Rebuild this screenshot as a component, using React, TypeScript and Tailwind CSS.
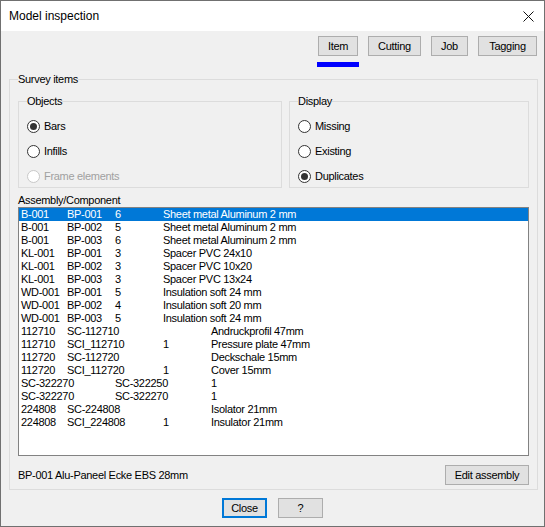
import React from 'react';

type Cell = { text: string; col: number };
type Row = Cell[];

const COLS = ['col-start-1', 'col-start-2', 'col-start-3', 'col-start-4', 'col-start-5'];

const simple = (a: string, b: string, q: string, d: string): Row => [
  { text: a, col: 0 },
  { text: b, col: 1 },
  { text: q, col: 2 },
  { text: d, col: 3 },
];

const rows: Row[] = [
  simple('B-001', 'BP-001', '6', 'Sheet metal Aluminum 2 mm'),
  simple('B-001', 'BP-002', '5', 'Sheet metal Aluminum 2 mm'),
  simple('B-001', 'BP-003', '6', 'Sheet metal Aluminum 2 mm'),
  simple('KL-001', 'BP-001', '3', 'Spacer PVC 24x10'),
  simple('KL-001', 'BP-002', '3', 'Spacer PVC 10x20'),
  simple('KL-001', 'BP-003', '3', 'Spacer PVC 13x24'),
  simple('WD-001', 'BP-001', '5', 'Insulation soft 24 mm'),
  simple('WD-001', 'BP-002', '4', 'Insulation soft 20 mm'),
  simple('WD-001', 'BP-003', '5', 'Insulation soft 24 mm'),
  [
    { text: '112710', col: 0 },
    { text: 'SC-112710', col: 1 },
    { text: 'Andruckprofil 47mm', col: 4 },
  ],
  [
    { text: '112710', col: 0 },
    { text: 'SCI_112710', col: 1 },
    { text: '1', col: 3 },
    { text: 'Pressure plate 47mm', col: 4 },
  ],
  [
    { text: '112720', col: 0 },
    { text: 'SC-112720', col: 1 },
    { text: 'Deckschale 15mm', col: 4 },
  ],
  [
    { text: '112720', col: 0 },
    { text: 'SCI_112720', col: 1 },
    { text: '1', col: 3 },
    { text: 'Cover 15mm', col: 4 },
  ],
  [
    { text: 'SC-322270', col: 0 },
    { text: 'SC-322250', col: 2 },
    { text: '1', col: 4 },
  ],
  [
    { text: 'SC-322270', col: 0 },
    { text: 'SC-322270', col: 2 },
    { text: '1', col: 4 },
  ],
  [
    { text: '224808', col: 0 },
    { text: 'SC-224808', col: 1 },
    { text: 'Isolator 21mm', col: 4 },
  ],
  [
    { text: '224808', col: 0 },
    { text: 'SCI_224808', col: 1 },
    { text: '1', col: 3 },
    { text: 'Insulator 21mm', col: 4 },
  ],
];

const Btn: React.FC<{ label: string; w: string; focused?: boolean }> = ({ label, w, focused }) => (
  <button
    className={
      'h-[20px] bg-[#e1e1e1] text-black leading-none flex items-center justify-center ' +
      w +
      (focused ? ' border-2 border-[#0078d7]' : ' border border-[#adadad]')
    }
  >
    {label}
  </button>
);

const Radio: React.FC<{ label: string; checked?: boolean; disabled?: boolean }> = ({
  label,
  checked,
  disabled,
}) => (
  <div className="h-[20px] flex items-center">
    <span
      className={
        'w-[13px] h-[13px] rounded-full border bg-white flex items-center justify-center ' +
        (disabled ? 'border-[#c8c8c8]' : 'border-[#333333]')
      }
    >
      {checked && <span className="w-[7px] h-[7px] rounded-full bg-[#333333]" />}
    </span>
    <span className={'ml-[4px] ' + (disabled ? 'text-[#a0a0a0]' : 'text-black')}>{label}</span>
  </div>
);

export default function App() {
  return (
    <div className="w-[545px] h-[527px] border border-[#707070] bg-[#f0f0f0] flex flex-col font-['Liberation_Sans',Arial,sans-serif] text-[11px] tracking-[-0.3px] text-black select-none">
      {/* Title bar */}
      <div className="h-[30px] bg-white flex items-center justify-between pl-[8px] pr-[10px] shrink-0">
        <span className="text-[12px] tracking-normal">Model inspection</span>
        <svg width="11" height="11" viewBox="0 0 11 11" className="mt-px">
          <path d="M0.5 0.5 L10.5 10.5 M10.5 0.5 L0.5 10.5" stroke="#111" strokeWidth="1" />
        </svg>
      </div>

      {/* Tabs */}
      <div className="flex justify-end items-start pt-[5px] pr-[7px]">
        <div className="flex flex-col items-center">
          <Btn label="Item" w="w-[40px]" />
          <div className="mt-[6px] h-[5px] w-[42px] bg-[#0000ff]" />
        </div>
        <div className="ml-[9px]">
          <Btn label="Cutting" w="w-[53px]" />
        </div>
        <div className="ml-[10px]">
          <Btn label="Job" w="w-[37px]" />
        </div>
        <div className="ml-[10px]">
          <Btn label="Tagging" w="w-[59px]" />
        </div>
      </div>

      {/* Survey items */}
      <fieldset className="mt-[6px] ml-[8px] w-[529px] border border-[#dcdcdc] px-[8px] pt-[9px] pb-[4px]">
        <legend className="px-0 leading-[13px]">Survey items</legend>

        <div className="flex gap-[7px]">
          <fieldset className="w-[264px] border border-[#dcdcdc] px-[8px] pt-[8px] pb-[1px]">
            <legend className="leading-[13px]">Objects</legend>
            <div className="flex flex-col gap-[5px]">
              <Radio label="Bars" checked />
              <Radio label="Infills" />
              <Radio label="Frame elements" disabled />
            </div>
          </fieldset>
          <fieldset className="w-[240px] border border-[#dcdcdc] px-[8px] pt-[8px] pb-[1px]">
            <legend className="leading-[13px]">Display</legend>
            <div className="flex flex-col gap-[5px]">
              <Radio label="Missing" />
              <Radio label="Existing" />
              <Radio label="Duplicates" checked />
            </div>
          </fieldset>
        </div>

        <div className="mt-[6px] leading-[13px]">Assembly/Component</div>

        <div className="h-[249px] border border-[#828282] bg-white overflow-hidden">
          {rows.map((row, i) => (
            <div
              key={i}
              className={
                'h-[13px] leading-[13px] pl-[2px] grid grid-cols-[46px_48px_48px_48px_1fr] ' +
                (i === 0 ? 'bg-[#0078d7] text-white' : 'text-black')
              }
            >
              {row.map((c, j) => (
                <span key={j} className={'row-start-1 whitespace-nowrap ' + COLS[c.col]}>
                  {c.text}
                </span>
              ))}
            </div>
          ))}
        </div>

        <div className="mt-[9px] flex items-center justify-between">
          <span>BP-001 Alu-Paneel Ecke EBS 28mm</span>
          <Btn label="Edit assembly" w="w-[84px]" />
        </div>
      </fieldset>

      {/* Footer buttons */}
      <div className="mt-[8px] flex justify-center gap-[11px]">
        <Btn label="Close" w="w-[45px]" focused />
        <Btn label="?" w="w-[45px]" />
      </div>
    </div>
  );
}
